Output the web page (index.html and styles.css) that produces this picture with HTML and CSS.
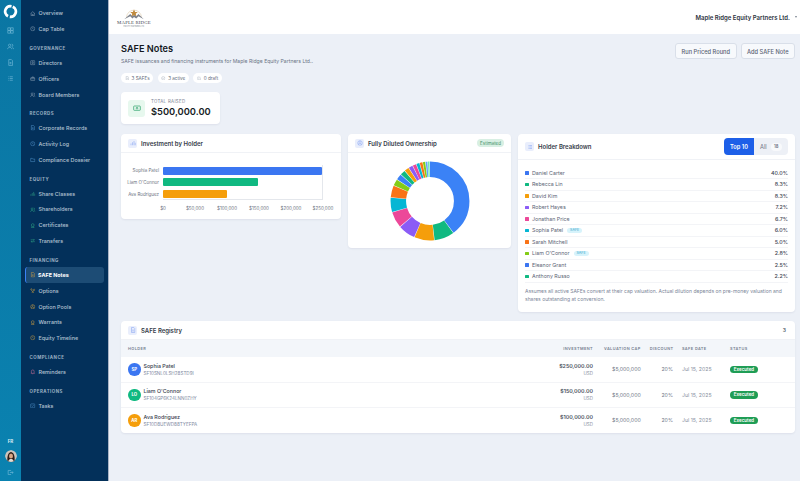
FILE: index.html
```html
<!DOCTYPE html>
<html lang="en">
<head>
  <meta charset="UTF-8">
  <meta name="viewport" content="width=device-width, initial-scale=1.0">
  <title>SAFE Notes</title>
  <link rel="stylesheet" href="styles.css">
</head>
<body>
  <!-- Icon set -->
  <svg class="defs" aria-hidden="true">
    <symbol id="i-home" viewBox="0 0 24 24"><path d="M3 11l9-8 9 8M5 9.5V21h14V9.5M10 21v-6h4v6"/></symbol>
    <symbol id="i-clock" viewBox="0 0 24 24"><circle cx="12" cy="12" r="9"/><path d="M12 7v5l3 3"/></symbol>
    <symbol id="i-user" viewBox="0 0 24 24"><rect x="3" y="3" width="18" height="18" rx="2"/><circle cx="12" cy="10" r="3"/><path d="M6 19c1-4 11-4 12 0"/></symbol>
    <symbol id="i-case" viewBox="0 0 24 24"><rect x="3" y="7" width="18" height="13" rx="2"/><path d="M9 7V4h6v3M3 12h18"/></symbol>
    <symbol id="i-users" viewBox="0 0 24 24"><circle cx="9" cy="8" r="4"/><path d="M2 21c0-8 14-8 14 0M16 4a4 4 0 010 8M18 14c3 1 4 4 4 7"/></symbol>
    <symbol id="i-doc" viewBox="0 0 24 24"><path d="M6 2h9l4 4v16H6zM9 12h6M9 16h6"/></symbol>
    <symbol id="i-folder" viewBox="0 0 24 24"><path d="M3 6h7l2 3h9v11H3z"/></symbol>
    <symbol id="i-bars" viewBox="0 0 24 24"><path d="M4 21v-7M10 21V9M16 21V4M21 21v-10"/></symbol>
    <symbol id="i-medal" viewBox="0 0 24 24"><circle cx="12" cy="9" r="6"/><path d="M8 14l-1 8 5-3 5 3-1-8"/></symbol>
    <symbol id="i-swap" viewBox="0 0 24 24"><path d="M3 8h16M15 4l4 4-4 4M21 16H5M9 12l-4 4 4 4"/></symbol>
    <symbol id="i-branch" viewBox="0 0 24 24"><circle cx="6" cy="6" r="3"/><circle cx="18" cy="8" r="3"/><circle cx="12" cy="19" r="3"/><path d="M7 9l4 7M16 10l-3 6"/></symbol>
    <symbol id="i-pie" viewBox="0 0 24 24"><circle cx="12" cy="12" r="9"/><path d="M12 3v9l6 6M12 12l-7 5"/></symbol>
    <symbol id="i-bell" viewBox="0 0 24 24"><path d="M6 17V10a6 6 0 0112 0v7l2 2H4zM10 22h4"/></symbol>
    <symbol id="i-check" viewBox="0 0 24 24"><rect x="3" y="4" width="18" height="17" rx="2"/><path d="M8 12l3 3 5-6"/></symbol>
    <symbol id="i-grid" viewBox="0 0 24 24"><rect x="3" y="3" width="8" height="8"/><rect x="13" y="3" width="8" height="8"/><rect x="3" y="13" width="8" height="8"/><rect x="13" y="13" width="8" height="8"/></symbol>
    <symbol id="i-circle-check" viewBox="0 0 24 24"><circle cx="12" cy="12" r="9"/><path d="M8 12l3 3 5-6"/></symbol>
    <symbol id="i-edit" viewBox="0 0 24 24"><path d="M4 5h10M4 5v15h15v-9M10 14l10-10"/></symbol>
    <symbol id="i-list" viewBox="0 0 24 24"><path d="M4 6h2M4 12h2M4 18h2M9 6h11M9 12h11M9 18h11"/></symbol>
    <symbol id="i-cash" viewBox="0 0 24 24"><rect x="2" y="6" width="20" height="13" rx="2"/><circle cx="12" cy="12.5" r="2.5"/></symbol>
    <symbol id="i-logout" viewBox="0 0 24 24"><path d="M14 5H4v14h10M10 12h11M17 8l4 4-4 4"/></symbol>
  </svg>

  <div class="app">
    <!-- Narrow rail -->
    <aside class="rail">
      <svg class="rail-logo" viewBox="0 0 24 24"><circle cx="12" cy="12" r="8.5" pathLength="100" stroke-dasharray="44 6" transform="rotate(-65 12 12)"/></svg>
      <div class="rail-icons">
        <svg class="rail-ico"><use href="#i-grid"/></svg>
        <svg class="rail-ico"><use href="#i-users"/></svg>
        <svg class="rail-ico"><use href="#i-doc"/></svg>
        <svg class="rail-ico"><use href="#i-list"/></svg>
      </div>
      <div class="rail-bottom">
        <span class="rail-initials">FR</span>
        <svg class="rail-avatar" viewBox="0 0 24 24">
          <circle cx="12" cy="12" r="12" fill="#c9c4bd"/>
          <path d="M5 24c-1-8 0-19 7-20 7 1 8 12 7 20z" fill="#2c1c17"/>
          <ellipse cx="12" cy="12" rx="4" ry="5" fill="#d9a684"/>
          <path d="M6 24c1-5 4-6 6-6s5 1 6 6z" fill="#e3ddd6"/>
        </svg>
        <svg class="rail-ico"><use href="#i-logout"/></svg>
      </div>
    </aside>

    <!-- Sidebar -->
    <nav class="sidebar">
      <a class="nav-item c-grey"><svg class="ico"><use href="#i-home"/></svg>Overview</a>
      <a class="nav-item c-grey"><svg class="ico"><use href="#i-clock"/></svg>Cap Table</a>
      <div class="nav-label">GOVERNANCE</div>
      <a class="nav-item c-grey"><svg class="ico"><use href="#i-user"/></svg>Directors</a>
      <a class="nav-item c-grey"><svg class="ico"><use href="#i-case"/></svg>Officers</a>
      <a class="nav-item c-grey"><svg class="ico"><use href="#i-users"/></svg>Board Members</a>
      <div class="nav-label">RECORDS</div>
      <a class="nav-item c-blue"><svg class="ico"><use href="#i-doc"/></svg>Corporate Records</a>
      <a class="nav-item c-blue"><svg class="ico"><use href="#i-clock"/></svg>Activity Log</a>
      <a class="nav-item c-blue"><svg class="ico"><use href="#i-folder"/></svg>Compliance Dossier</a>
      <div class="nav-label">EQUITY</div>
      <a class="nav-item c-green"><svg class="ico"><use href="#i-bars"/></svg>Share Classes</a>
      <a class="nav-item c-green"><svg class="ico"><use href="#i-users"/></svg>Shareholders</a>
      <a class="nav-item c-green"><svg class="ico"><use href="#i-medal"/></svg>Certificates</a>
      <a class="nav-item c-green"><svg class="ico"><use href="#i-swap"/></svg>Transfers</a>
      <div class="nav-label">FINANCING</div>
      <a class="nav-item c-amber active"><svg class="ico"><use href="#i-doc"/></svg>SAFE Notes</a>
      <a class="nav-item c-amber"><svg class="ico"><use href="#i-branch"/></svg>Options</a>
      <a class="nav-item c-amber"><svg class="ico"><use href="#i-pie"/></svg>Option Pools</a>
      <a class="nav-item c-amber"><svg class="ico"><use href="#i-medal"/></svg>Warrants</a>
      <a class="nav-item c-amber"><svg class="ico"><use href="#i-clock"/></svg>Equity Timeline</a>
      <div class="nav-label">COMPLIANCE</div>
      <a class="nav-item c-pink"><svg class="ico"><use href="#i-bell"/></svg>Reminders</a>
      <div class="nav-label">OPERATIONS</div>
      <a class="nav-item c-blue"><svg class="ico"><use href="#i-check"/></svg>Tasks</a>
    </nav>

    <div class="main">
      <header class="topbar">
        <div class="brand">
          <svg class="brand-mark" viewBox="0 0 32 17">
            <path class="brand-arc" d="M6 14a10 10 0 0120 0"/>
            <path class="brand-hill" d="M3 16l8-7 3 3 2-2 3 2 3-3 7 7-7-4-3 3-3-2-2 2-3-3z"/>
            <path class="brand-star" d="M16 3l1.500 3.500 3.500 0-2.700 2.300 1 3.700-3.300-2-3.300 2 1-3.700L11 6.500l3.500 0z"/>
          </svg>
          <span class="brand-name">MAPLE RIDGE</span>
          <span class="brand-sub">EQUITY PARTNERS LTD.</span>
        </div>
        <div class="company">Maple Ridge Equity Partners Ltd.<span class="caret"></span></div>
      </header>

      <main class="content">
        <div class="page-head">
          <div>
            <h1>SAFE Notes</h1>
            <p class="subtitle">SAFE issuances and financing instruments for Maple Ridge Equity Partners Ltd..</p>
            <div class="chips">
              <span class="chip"><svg class="ico"><use href="#i-doc"/></svg>3 SAFEs</span>
              <span class="chip"><svg class="ico"><use href="#i-circle-check"/></svg>3 active</span>
              <span class="chip"><svg class="ico"><use href="#i-edit"/></svg>0 draft</span>
            </div>
          </div>
          <div class="actions">
            <button class="btn">Run Priced Round</button>
            <button class="btn">Add SAFE Note</button>
          </div>
        </div>

        <div class="card raised">
          <div class="raised-icon"><svg class="ico-md"><use href="#i-cash"/></svg></div>
          <div>
            <div class="raised-label">TOTAL RAISED</div>
            <div class="raised-value">$500,000.00</div>
          </div>
        </div>

        <div class="charts">
          <section class="card">
            <div class="card-head">
              <span class="tile"><svg class="ico-sm"><use href="#i-bars"/></svg></span>
              <h2>Investment by Holder</h2>
            </div>
            <div class="bar-chart">
              <div class="bar-names">
                <span>Sophia Patel</span>
                <span>Liam O'Connor</span>
                <span>Ava Rodriguez</span>
              </div>
              <div class="plot">
                <div class="bar bar-blue"></div>
                <div class="bar bar-green"></div>
                <div class="bar bar-amber"></div>
              </div>
              <div class="ticks">
                <span>$0</span><span>$50,000</span><span>$100,000</span><span>$150,000</span><span>$200,000</span><span>$250,000</span>
              </div>
            </div>
          </section>

          <section class="card">
            <div class="card-head">
              <span class="tile"><svg class="ico-sm"><use href="#i-pie"/></svg></span>
              <h2>Fully Diluted Ownership</h2>
              <span class="estimated">Estimated</span>
            </div>
            <div class="donut-wrap">
              <svg class="donut" viewBox="0 0 80 80">
                <g transform="rotate(-90 40 40)" fill="none" stroke-width="15.5">
                  <circle cx="40" cy="40" r="31.700" pathLength="100" stroke="#3b82f6" stroke-dasharray="39.800 100" stroke-dashoffset="0"/>
                  <circle cx="40" cy="40" r="31.700" pathLength="100" stroke="#10b981" stroke-dasharray="8.100 100" stroke-dashoffset="-40"/>
                  <circle cx="40" cy="40" r="31.700" pathLength="100" stroke="#f59e0b" stroke-dasharray="8.100 100" stroke-dashoffset="-48.300"/>
                  <circle cx="40" cy="40" r="31.700" pathLength="100" stroke="#8b5cf6" stroke-dasharray="7 100" stroke-dashoffset="-56.600"/>
                  <circle cx="40" cy="40" r="31.700" pathLength="100" stroke="#ec4899" stroke-dasharray="6.500 100" stroke-dashoffset="-63.800"/>
                  <circle cx="40" cy="40" r="31.700" pathLength="100" stroke="#06b6d4" stroke-dasharray="5.800 100" stroke-dashoffset="-70.500"/>
                  <circle cx="40" cy="40" r="31.700" pathLength="100" stroke="#f97316" stroke-dasharray="4.800 100" stroke-dashoffset="-76.500"/>
                  <circle cx="40" cy="40" r="31.700" pathLength="100" stroke="#84cc16" stroke-dasharray="2.600 100" stroke-dashoffset="-81.500"/>
                  <circle cx="40" cy="40" r="31.700" pathLength="100" stroke="#3b82f6" stroke-dasharray="2.300 100" stroke-dashoffset="-84.300"/>
                  <circle cx="40" cy="40" r="31.700" pathLength="100" stroke="#10b981" stroke-dasharray="2 100" stroke-dashoffset="-86.800"/>
                  <circle cx="40" cy="40" r="31.700" pathLength="100" stroke="#f59e0b" stroke-dasharray="1.800 100" stroke-dashoffset="-89"/>
                  <circle cx="40" cy="40" r="31.700" pathLength="100" stroke="#8b5cf6" stroke-dasharray="1.600 100" stroke-dashoffset="-91"/>
                  <circle cx="40" cy="40" r="31.700" pathLength="100" stroke="#ec4899" stroke-dasharray="1.400 100" stroke-dashoffset="-92.800"/>
                  <circle cx="40" cy="40" r="31.700" pathLength="100" stroke="#06b6d4" stroke-dasharray="1.200 100" stroke-dashoffset="-94.400"/>
                  <circle cx="40" cy="40" r="31.700" pathLength="100" stroke="#f97316" stroke-dasharray="1.100 100" stroke-dashoffset="-95.800"/>
                  <circle cx="40" cy="40" r="31.700" pathLength="100" stroke="#84cc16" stroke-dasharray="0.900 100" stroke-dashoffset="-97.100"/>
                  <circle cx="40" cy="40" r="31.700" pathLength="100" stroke="#60a5fa" stroke-dasharray="0.700 100" stroke-dashoffset="-98.200"/>
                  <circle cx="40" cy="40" r="31.700" pathLength="100" stroke="#6ee7b7" stroke-dasharray="0.700 100" stroke-dashoffset="-99.100"/>
                </g>
              </svg>
            </div>
          </section>

          <section class="card">
            <div class="card-head card-head-tall">
              <span class="tile"><svg class="ico-sm"><use href="#i-list"/></svg></span>
              <h2>Holder Breakdown</h2>
              <div class="toggle">
                <span class="toggle-on">Top 10</span>
                <span class="toggle-off">All <b>18</b></span>
              </div>
            </div>
            <ul class="holders">
              <li><i class="dot d-blue"></i>Daniel Carter<b>40.0%</b></li>
              <li><i class="dot d-green"></i>Rebecca Lin<b>8.3%</b></li>
              <li><i class="dot d-amber"></i>David Kim<b>8.3%</b></li>
              <li><i class="dot d-purple"></i>Robert Hayes<b>7.2%</b></li>
              <li><i class="dot d-pink"></i>Jonathan Price<b>6.7%</b></li>
              <li><i class="dot d-cyan"></i>Sophia Patel<span class="tag">SAFE</span><b>6.0%</b></li>
              <li><i class="dot d-orange"></i>Sarah Mitchell<b>5.0%</b></li>
              <li><i class="dot d-lime"></i>Liam O'Connor<span class="tag">SAFE</span><b>2.8%</b></li>
              <li><i class="dot d-blue"></i>Eleanor Grant<b>2.5%</b></li>
              <li><i class="dot d-green"></i>Anthony Russo<b>2.2%</b></li>
            </ul>
            <p class="note">Assumes all active SAFEs convert at their cap valuation. Actual dilution depends on pre-money valuation and shares outstanding at conversion.</p>
          </section>
        </div>

        <section class="card registry">
          <div class="card-head">
            <span class="tile"><svg class="ico-sm"><use href="#i-doc"/></svg></span>
            <h2>SAFE Registry</h2>
            <span class="count">3</span>
          </div>
          <table>
            <colgroup>
              <col class="col-holder"><col class="col-inv"><col class="col-cap"><col class="col-disc"><col class="col-date"><col class="col-status">
            </colgroup>
            <thead>
              <tr>
                <th>HOLDER</th>
                <th class="num">INVESTMENT</th>
                <th class="num">VALUATION CAP</th>
                <th class="num">DISCOUNT</th>
                <th>SAFE DATE</th>
                <th>STATUS</th>
              </tr>
            </thead>
            <tbody>
              <tr>
                <td><div class="holder"><span class="avatar d-blue">SP</span><div><div class="holder-name">Sophia Patel</div><div class="holder-id">SF10SNL0LSH28STD9I</div></div></div></td>
                <td class="num"><div class="amount">$250,000.00</div><div class="currency">USD</div></td>
                <td class="num muted">$5,000,000</td>
                <td class="num muted">20%</td>
                <td class="date">Jul 15, 2025</td>
                <td><span class="status">Executed</span></td>
              </tr>
              <tr>
                <td><div class="holder"><span class="avatar d-green">LO</span><div><div class="holder-name">Liam O'Connor</div><div class="holder-id">SF104GP6K24LNN0ZHY</div></div></div></td>
                <td class="num"><div class="amount">$150,000.00</div><div class="currency">USD</div></td>
                <td class="num muted">$5,000,000</td>
                <td class="num muted">20%</td>
                <td class="date">Jul 15, 2025</td>
                <td><span class="status">Executed</span></td>
              </tr>
              <tr>
                <td><div class="holder"><span class="avatar d-amber">AR</span><div><div class="holder-name">Ava Rodriguez</div><div class="holder-id">SF10D8UEWD88TYEFPA</div></div></div></td>
                <td class="num"><div class="amount">$100,000.00</div><div class="currency">USD</div></td>
                <td class="num muted">$5,000,000</td>
                <td class="num muted">20%</td>
                <td class="date">Jul 15, 2025</td>
                <td><span class="status">Executed</span></td>
              </tr>
            </tbody>
          </table>
        </section>
      </main>
    </div>
  </div>
</body>
</html>
```
FILE: styles.css
```css
* {
  box-sizing: border-box;
}

body {
  margin: 0;
  font-family: Inter, "Liberation Sans", sans-serif;
  color: #2b3240;
  background: #ecf0f7;
}

.defs {
  display: none;
}

svg use {
  fill: none;
  stroke: currentColor;
  stroke-width: 2;
}

.app {
  display: flex;
  height: 481px;
  overflow: hidden;
}

/* Rail */
.rail {
  width: 21px;
  flex: none;
  display: flex;
  flex-direction: column;
  align-items: center;
  background: linear-gradient(180deg, #0b76a3, #0a82b0);
}

.rail-logo {
  width: 15px;
  height: 15px;
  margin-top: 3.500px;
  fill: none;
  stroke: #fff;
  stroke-width: 4.500;
}

.rail-icons {
  display: flex;
  flex-direction: column;
  gap: 9px;
  margin-top: 8.500px;
}

.rail-ico {
  display: block;
  width: 7px;
  height: 7px;
  color: #7cc0dc;
}

.rail-bottom {
  margin-top: auto;
  display: flex;
  flex-direction: column;
  align-items: center;
  padding-bottom: 5.500px;
}

.rail-initials {
  font-size: 4.500px;
  font-weight: 700;
  color: #d5ecf5;
  margin-bottom: 6px;
}

.rail-avatar {
  width: 12px;
  height: 12px;
  border-radius: 50%;
  margin-bottom: 6.500px;
}

/* Sidebar */
.sidebar {
  width: 87px;
  flex: none;
  padding-top: 5.400px;
  background: #03305a;
}

.nav-item {
  display: flex;
  align-items: center;
  gap: 3px;
  height: 15.850px;
  margin: 0 4px;
  padding-left: 5px;
  font-size: 5.400px;
  font-weight: 500;
  color: #b4c3d3;
  border-radius: 3px;
}

.nav-item .ico {
  width: 5.500px;
  height: 5.500px;
}

.nav-item.active {
  background: #1d4c75;
  border-left: 1.500px solid #3b82f6;
  padding-left: 3.500px;
  color: #fff;
  font-weight: 700;
}

.nav-label {
  height: 17.850px;
  padding: 8.800px 0 0 8.500px;
  font-size: 4.400px;
  font-weight: 700;
  letter-spacing: 0.500px;
  color: #9cb0c4;
}

.ico {
  display: block;
  flex: none;
  width: 6px;
  height: 6px;
}

.ico-sm {
  display: block;
  width: 6px;
  height: 6px;
}

.ico-md {
  display: block;
  width: 8px;
  height: 8px;
}

.c-grey .ico { color: #9fb0c1; }
.c-blue .ico { color: #5a9fd8; }
.c-green .ico { color: #34b38a; }
.c-amber .ico { color: #d9a441; }
.c-pink .ico { color: #e57aa0; }

/* Top bar */
.main {
  flex: 1;
  min-width: 0;
  display: flex;
  flex-direction: column;
  border-left: 1px solid #aab4c6;
}

.topbar {
  height: 34px;
  flex: none;
  display: flex;
  align-items: center;
  justify-content: space-between;
  padding: 0 3.500px 0 8px;
  background: #fff;
}

.brand {
  width: 34px;
  display: flex;
  flex-direction: column;
  align-items: center;
}

.brand-mark {
  width: 24px;
  height: 13px;
}

.brand-arc {
  fill: none;
  stroke: #c9a877;
  stroke-width: 0.500;
}

.brand-hill {
  fill: #7b818c;
}

.brand-star {
  fill: #c08a3e;
}

.brand-name {
  font-family: "Liberation Serif", serif;
  font-size: 4.800px;
  letter-spacing: 0.150px;
  color: #3e4550;
  white-space: nowrap;
}

.brand-sub {
  font-size: 1.800px;
  color: #7a808a;
  white-space: nowrap;
}

.company {
  display: flex;
  align-items: center;
  font-size: 6px;
  font-weight: 600;
  color: #2d3441;
  white-space: nowrap;
}

.caret {
  width: 0;
  height: 0;
  margin-left: 4.500px;
  border-left: 1.500px solid transparent;
  border-right: 1.500px solid transparent;
  border-top: 2px solid #7a828f;
}

/* Content */
.content {
  flex: 1;
  padding: 9px 5px 0 12px;
}

.page-head {
  display: flex;
  justify-content: space-between;
  align-items: flex-start;
}

h1 {
  margin: 0;
  font-size: 9.200px;
  line-height: 12px;
  font-weight: 600;
  color: #14181f;
}

.subtitle {
  margin: 3px 0 0;
  font-size: 5.100px;
  line-height: 7px;
  color: #6b7485;
}

.chips {
  display: flex;
  gap: 4.500px;
  margin-top: 8px;
}

.chip {
  display: flex;
  align-items: center;
  gap: 2.500px;
  height: 10px;
  padding: 0 3.500px;
  border-radius: 5px;
  background: #fff;
  font-size: 4.600px;
  color: #5e6778;
}

.chip .ico {
  width: 4.500px;
  height: 4.500px;
  color: #9aa3b2;
}

.actions {
  display: flex;
  gap: 4px;
}

.btn {
  height: 16px;
  padding: 0 5.500px;
  font-family: inherit;
  font-size: 5.700px;
  font-weight: 500;
  color: #596273;
  background: #f7f9fc;
  border: 1px solid #d9dfe9;
  border-radius: 3px;
}

.card {
  background: #fff;
  border-radius: 4px;
  box-shadow: 0 1px 2px rgba(40, 55, 85, 0.08);
}

.raised {
  display: flex;
  align-items: center;
  gap: 6px;
  width: 99px;
  height: 32px;
  margin-top: 9px;
  padding-left: 7px;
}

.raised-icon {
  width: 17px;
  height: 17px;
  display: flex;
  align-items: center;
  justify-content: center;
  border-radius: 3px;
  background: #e7f8ee;
  color: #1f9d62;
}

.raised-label {
  font-size: 4.400px;
  letter-spacing: 0.300px;
  color: #7a8394;
}

.raised-value {
  margin-top: 2px;
  font-size: 9.300px;
  line-height: 11px;
  font-weight: 600;
  color: #161b24;
}

.charts {
  display: grid;
  grid-template-columns: 220px 163px 277px;
  gap: 7px;
  align-items: start;
  margin-top: 10px;
}

.card-head {
  display: flex;
  align-items: center;
  gap: 4px;
  height: 19px;
  padding: 0 7px;
  border-bottom: 1px solid #f0f2f6;
}

.card-head-tall {
  height: 26px;
}

.tile {
  width: 9px;
  height: 9px;
  flex: none;
  display: flex;
  align-items: center;
  justify-content: center;
  border-radius: 2px;
  background: #e9eefc;
  color: #7d9cf0;
}

h2 {
  margin: 0;
  font-size: 6px;
  font-weight: 600;
  color: #363d4a;
}

.estimated {
  margin-left: auto;
  padding: 1.500px 3px;
  border-radius: 4px;
  background: #d8efe3;
  font-size: 4.500px;
  color: #3f8f68;
}

/* Bar chart */
.bar-chart {
  display: grid;
  grid-template-columns: 42px 160px;
  padding: 12px 0 8px;
}

.bar-names {
  display: flex;
  flex-direction: column;
  justify-content: space-around;
  align-items: flex-end;
  padding-right: 4px;
  font-size: 4.500px;
  color: #6b7280;
}

.plot {
  display: flex;
  flex-direction: column;
  gap: 3.500px;
  height: 35px;
  padding: 1.500px 0;
  border-bottom: 1px solid #e4e7ec;
  border-right: 0.500px solid #e4e7ec;
  background: repeating-linear-gradient(90deg, #e4e7ec 0 0.500px, transparent 0.500px 32px);
}

.bar {
  height: 8.800px;
  border-radius: 1px;
}

.bar-blue { width: 100%; background: #3b76f1; }
.bar-green { width: 60%; background: #10b981; }
.bar-amber { width: 40%; background: #f59e0b; }

.ticks {
  grid-column: 2;
  display: grid;
  grid-template-columns: repeat(6, 32px);
  width: 192px;
  margin: 5.500px 0 0 -16px;
  text-align: center;
  font-size: 4.500px;
  color: #6b7280;
}

/* Donut */
.donut-wrap {
  height: 95px;
  display: flex;
  justify-content: center;
  padding-top: 8px;
}

.donut {
  width: 80px;
  height: 80px;
}

/* Holder breakdown */
.toggle {
  margin-left: auto;
  display: flex;
  align-items: center;
  height: 17px;
  border-radius: 4px;
  background: #edf0f6;
  font-size: 5.700px;
}

.toggle-on {
  width: 30px;
  height: 17px;
  line-height: 17px;
  text-align: center;
  border-radius: 4px 0 0 4px;
  background: #1d5fe8;
  color: #fff;
  font-weight: 600;
}

.toggle-off {
  display: flex;
  align-items: center;
  width: 34px;
  padding-left: 6px;
  color: #6b7280;
}

.toggle-off b {
  width: 11px;
  height: 8px;
  line-height: 8px;
  margin-left: 4px;
  text-align: center;
  border-radius: 4px;
  background: #f8f9fb;
  font-size: 4.200px;
  font-weight: 600;
}

.holders {
  list-style: none;
  margin: 7.500px 0 0;
  padding: 0 7px;
}

.holders li {
  display: flex;
  align-items: center;
  height: 11.500px;
  font-size: 5.300px;
  color: #5c6576;
  border-bottom: 0.500px solid #f3f4f7;
}

.holders b {
  margin-left: auto;
  font-weight: 500;
  color: #3f4653;
}

.dot {
  width: 3.500px;
  height: 3.500px;
  margin-right: 3.500px;
  border-radius: 0.500px;
}

.d-blue { background: #3b76f1; }
.d-green { background: #10b981; }
.d-amber { background: #f59e0b; }
.d-purple { background: #8b5cf6; }
.d-pink { background: #ec4899; }
.d-cyan { background: #06b6d4; }
.d-orange { background: #f97316; }
.d-lime { background: #84cc16; }

.tag {
  margin-left: 4px;
  padding: 0.500px 3px;
  border-radius: 3px;
  background: #d7f3fb;
  font-size: 3.600px;
  color: #3ba7cc;
}

.note {
  margin: 4px 0 0;
  padding: 0 7px 8.500px;
  font-size: 5px;
  line-height: 8.500px;
  color: #7b8598;
}

/* Registry */
.registry {
  margin-top: 9px;
  overflow: hidden;
}

.count {
  margin-left: auto;
  padding-right: 2px;
  font-size: 5px;
  font-weight: 600;
  color: #4b5563;
}

table {
  width: 674px;
  table-layout: fixed;
  border-collapse: collapse;
}

.col-holder { width: 419px; }
.col-inv { width: 57.500px; }
.col-cap { width: 47.700px; }
.col-disc { width: 32.300px; }
.col-date { width: 48px; }
.col-status { width: 69.500px; }

th {
  height: 17px;
  padding: 0 4.500px;
  text-align: left;
  font-size: 3.900px;
  font-weight: 600;
  letter-spacing: 0.400px;
  white-space: nowrap;
  color: #737d8f;
  background: #f3f6fa;
}

th:first-child,
td:first-child {
  padding-left: 7px;
}

th.num {
  text-align: right;
}

td {
  height: 25.300px;
  padding: 0 4.500px;
  font-size: 5.200px;
  border-bottom: 0.500px solid #f3f4f7;
}

tr:last-child td {
  border-bottom: none;
}

.num {
  text-align: right;
}

.muted {
  color: #6d7686;
}

.date {
  white-space: nowrap;
  color: #8790a0;
}

.holder {
  display: flex;
  align-items: center;
  gap: 3px;
}

.avatar {
  width: 12.500px;
  height: 12.500px;
  flex: none;
  display: flex;
  align-items: center;
  justify-content: center;
  border-radius: 50%;
  font-size: 4.300px;
  font-weight: 700;
  color: #fff;
}

.holder-name {
  font-size: 5.300px;
  font-weight: 500;
  color: #3a4250;
}

.holder-id {
  margin-top: 2px;
  font-size: 4.600px;
  color: #7f8ba3;
}

.amount {
  font-size: 5.300px;
  font-weight: 600;
  color: #4a5160;
}

.currency {
  margin-top: 2px;
  font-size: 4.500px;
  color: #8a93a3;
}

.status {
  display: inline-block;
  width: 28px;
  height: 7.500px;
  line-height: 7.500px;
  text-align: center;
  border-radius: 4px;
  background: #1f9d55;
  font-size: 4.500px;
  font-weight: 600;
  color: #fff;
}
```
